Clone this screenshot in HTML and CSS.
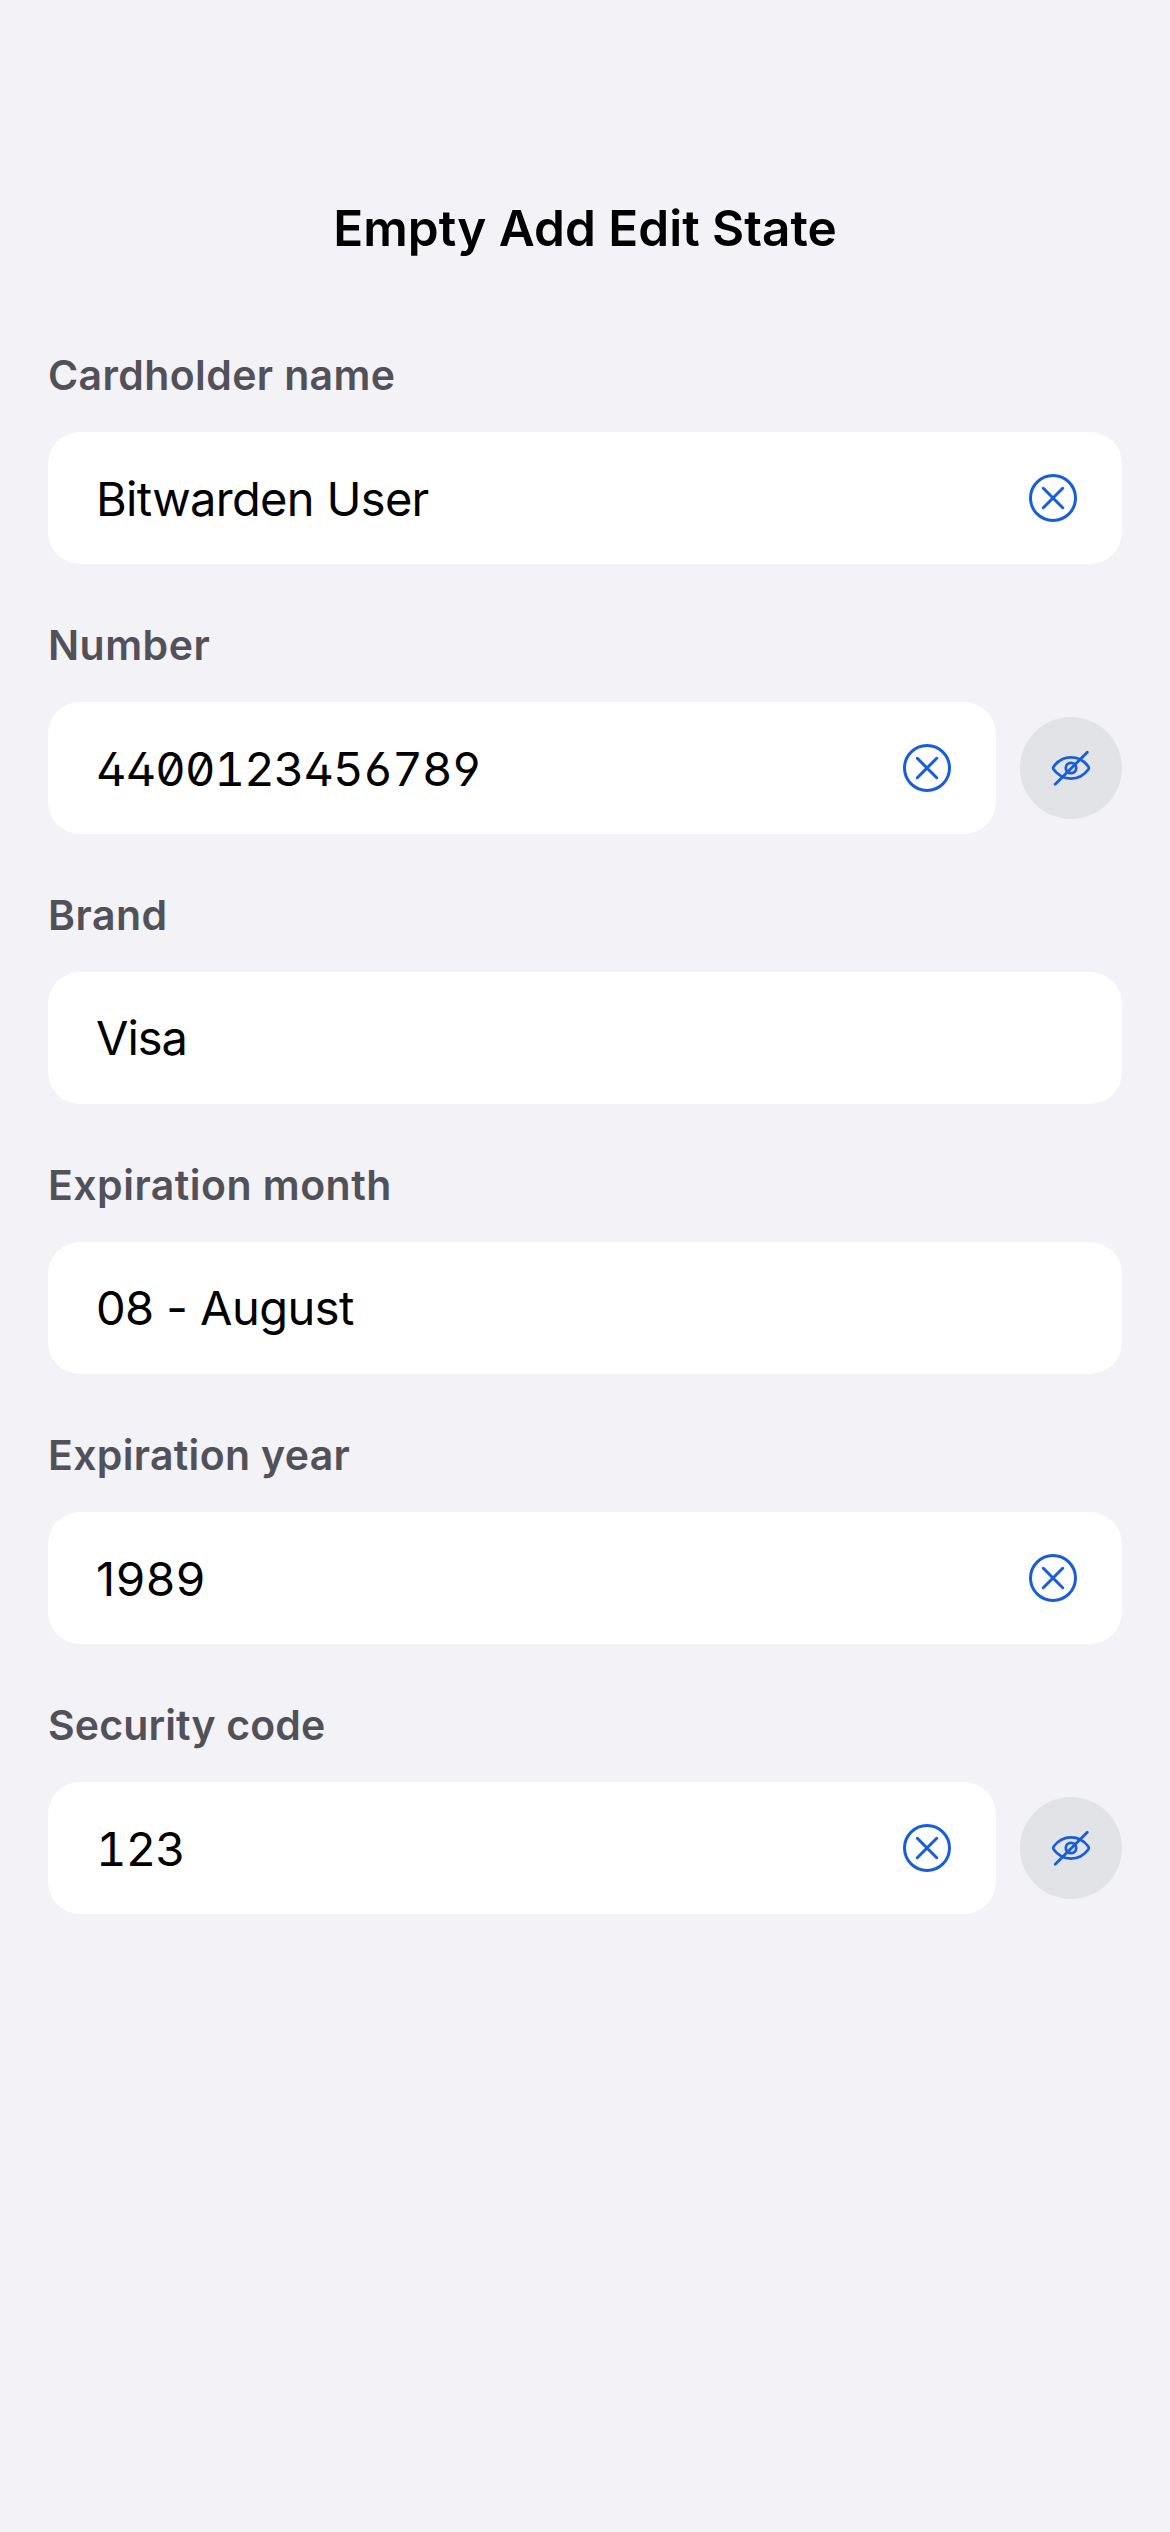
FILE: index.html
```
<!DOCTYPE html>
<html lang="en">
<head>
<meta charset="utf-8">
<title>Empty Add Edit State</title>
<link rel="stylesheet" href="styles.css">
</head>
<body>
<svg class="sprite" aria-hidden="true">
  <symbol id="clear" viewBox="0 0 48 48">
    <circle cx="24" cy="24" r="22.5" stroke-width="3"/>
    <path d="M14.3 14.3 33.7 33.7M33.7 14.3 14.3 33.7" stroke-width="3"/>
  </symbol>
  <symbol id="hide" viewBox="0 0 48 48">
    <path d="M6.700 22.500C11 16.700 17 13.400 24 13.400S37 16.700 41.300 22.500Q42.300 24 41.300 25.500C37 31.300 31 34.600 24 34.600S11 31.300 6.700 25.500Q5.700 24 6.700 22.500Z" stroke-width="2.8"/>
    <circle cx="24" cy="24" r="5.200" stroke-width="2.800"/>
    <path d="M8.200 40.300 40.300 8.200" stroke-width="2.800"/>
  </symbol>
</svg>
<main class="screen">
  <h1 class="title">Empty Add Edit State</h1>
  <form class="form">
    <section class="group">
      <h2 class="label label-cardholder">Cardholder name</h2>
      <div class="row"><div class="field"><span class="value">Bitwarden User</span><svg class="icon"><use href="#clear"/></svg></div></div>
    </section>
    <section class="group">
      <h2 class="label">Number</h2>
      <div class="row"><div class="field"><span class="value mono">4400123456789</span><svg class="icon"><use href="#clear"/></svg></div><div class="toggle"><svg class="icon"><use href="#hide"/></svg></div></div>
    </section>
    <section class="group">
      <h2 class="label">Brand</h2>
      <div class="row"><div class="field menu"><span class="value brand">Visa</span></div></div>
    </section>
    <section class="group">
      <h2 class="label">Expiration month</h2>
      <div class="row"><div class="field menu"><span class="value month">08 - August</span></div></div>
    </section>
    <section class="group">
      <h2 class="label label-year">Expiration year</h2>
      <div class="row"><div class="field"><span class="value year">1989</span><svg class="icon"><use href="#clear"/></svg></div></div>
    </section>
    <section class="group">
      <h2 class="label label-code">Security code</h2>
      <div class="row"><div class="field"><span class="value mono">123</span><svg class="icon"><use href="#clear"/></svg></div><div class="toggle"><svg class="icon"><use href="#hide"/></svg></div></div>
    </section>
  </form>
</main>
</body>
</html>
```
FILE: styles.css
```
* {
  box-sizing: border-box;
}

body {
  margin: 0;
  background: #f2f2f7;
  color: #000;
  font-family: Inter, "Liberation Sans", sans-serif;
}

.sprite {
  display: none;
}

.screen {
  min-height: 2532px;
  padding: 198px 48px 0;
}

.title {
  margin: 0 0 87px;
  font-size: 49.5px;
  font-weight: 600;
  line-height: 60px;
  text-align: center;
}

.form {
  display: flex;
  flex-direction: column;
  gap: 51px;
}

.group {
  display: flex;
  flex-direction: column;
  gap: 27px;
}

.label {
  margin: 0;
  color: #525159;
  font-size: 41px;
  font-weight: 600;
  line-height: 60px;
  letter-spacing: 0.48px;
}

.label-cardholder {
  letter-spacing: 0.38px;
}

.label-year {
  letter-spacing: 0.32px;
}

.label-code {
  letter-spacing: 0.12px;
}

.row {
  display: flex;
  align-items: center;
  gap: 24px;
}

.field {
  flex: 1;
  display: flex;
  align-items: center;
  justify-content: space-between;
  height: 132px;
  padding: 0 45px 0 48px;
  border-radius: 32px;
  background: #fff;
}

.value {
  padding-top: 2px;
  font-size: 47px;
  line-height: 60px;
  letter-spacing: -0.67px;
}

.menu .value {
  padding-top: 0;
}

.value.brand {
  letter-spacing: -1px;
}

.value.month {
  letter-spacing: -0.55px;
}

.value.year {
  letter-spacing: 0.9px;
}

.value.mono {
  font-feature-settings: "zero", "tnum", "cv02", "cv03", "cv04";
  letter-spacing: -0.85px;
}

.icon {
  width: 48px;
  height: 48px;
  fill: none;
  stroke: #175ddc;
  stroke-linecap: round;
  stroke-linejoin: round;
}

.toggle {
  display: flex;
  align-items: center;
  justify-content: center;
  width: 102px;
  height: 102px;
  border-radius: 50%;
  background: #e2e3e7;
}
```
